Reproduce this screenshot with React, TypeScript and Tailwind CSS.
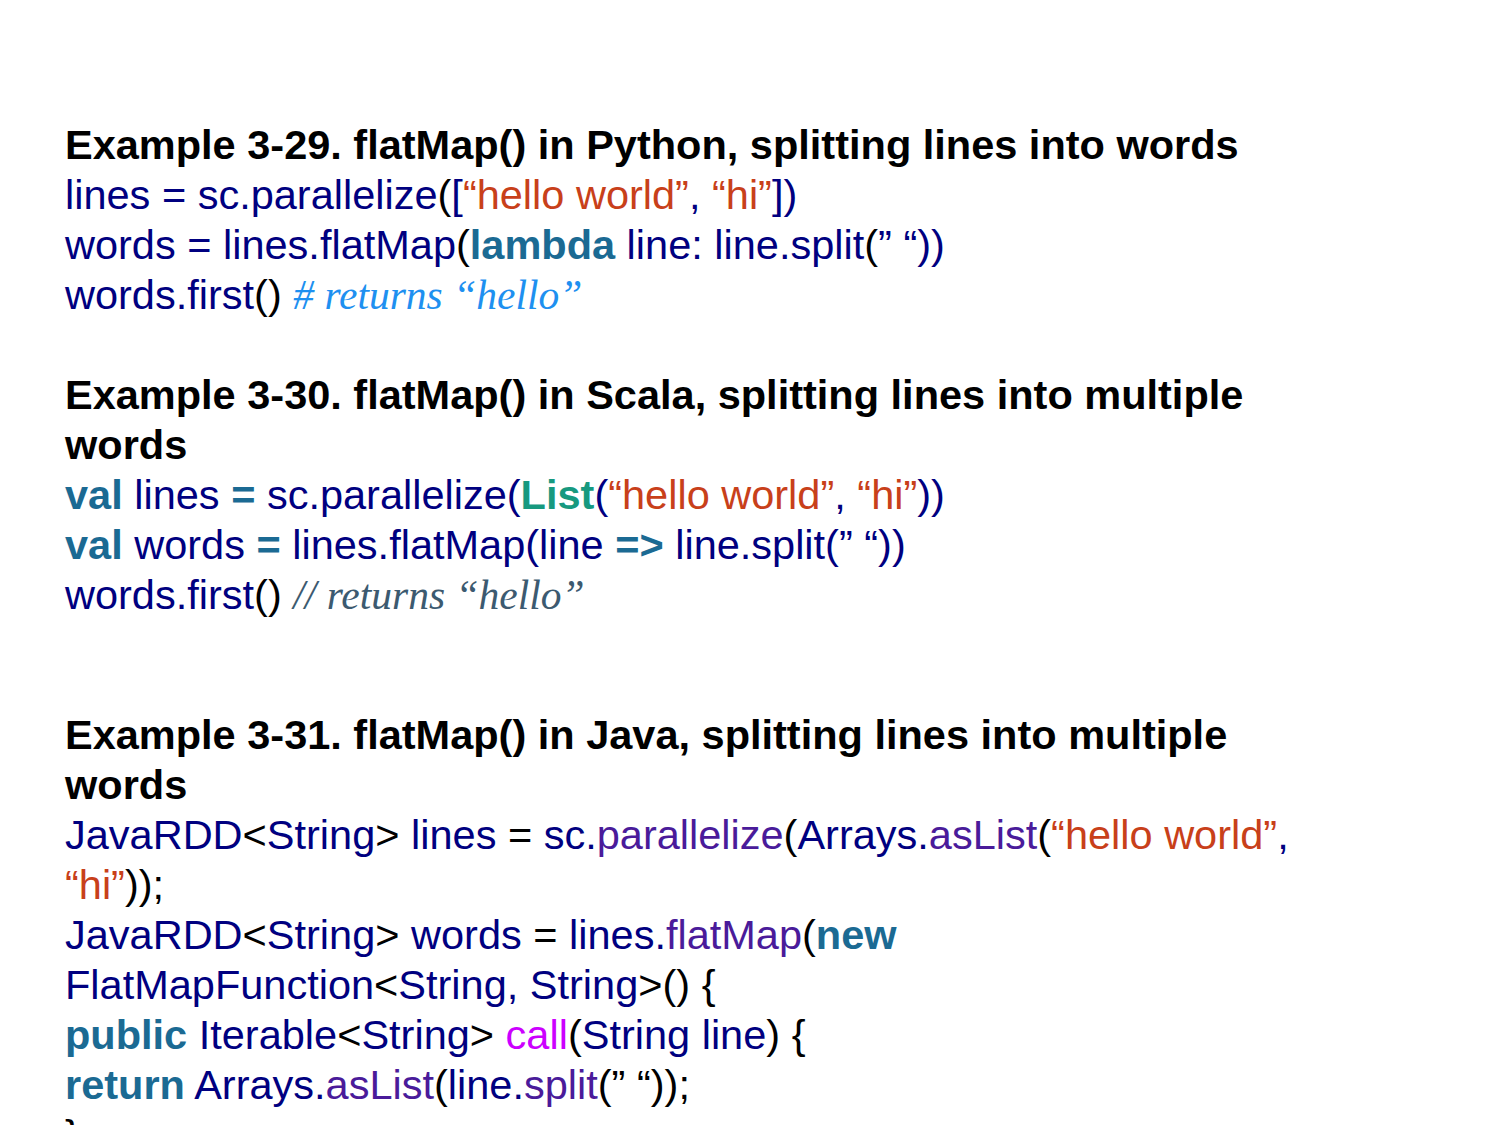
const N = "text-[#000080]";
const S = "text-[#c8401a]";
const K = "font-bold text-[#1b6a93]";
const P = "text-[#4a1b9a]";
const B = "text-black";

const Line = ({ children, className = "" }: { children: React.ReactNode; className?: string }) => (
  <div className={`h-[50px] leading-[50px] whitespace-pre ${className}`}>{children}</div>
);

const Title = ({ children }: { children: React.ReactNode }) => (
  <div className="font-bold text-black leading-[50px]">{children}</div>
);

export default function App() {
  return (
    <div
      className="w-[1500px] h-[1125px] overflow-hidden bg-white pl-[65px] pt-[120px] text-[41.5px]"
      style={{ fontFamily: '"Liberation Sans", Arial, sans-serif' }}
    >
      <Title>Example 3-29. flatMap() in Python, splitting lines into words</Title>
      <Line className={N}>
        lines = sc.parallelize<span className={B}>(</span>[<span className={S}>“hello world”</span>, <span className={S}>“hi”</span>])
      </Line>
      <Line className={N}>
        words = lines.flatMap<span className={B}>(</span><span className={K}>lambda</span> line: line.split<span className={B}>(</span>” “))
      </Line>
      <Line className={N}>
        words.first<span className={B}>()</span>{" "}
        <span className="italic text-[#1e90f0]" style={{ fontFamily: '"Liberation Serif", serif' }}># returns “hello”</span>
      </Line>

      <div className="mt-[50px] w-[1240px]">
        <Title>Example 3-30. flatMap() in Scala, splitting lines into multiple words</Title>
      </div>
      <Line className={N}>
        <span className={K}>val</span> lines <span className={K}>=</span> sc.parallelize(<span className="font-bold text-[#17997f]">List</span>(<span className={S}>“hello world”</span>, <span className={S}>“hi”</span>))
      </Line>
      <Line className={N}>
        <span className={K}>val</span> words <span className={K}>=</span> lines.flatMap(line <span className={K}>=&gt;</span> line.split(” “))
      </Line>
      <Line className={N}>
        words.first<span className={B}>()</span>{" "}
        <span className="italic text-[#3c5a70]" style={{ fontFamily: '"Liberation Serif", serif' }}>// returns “hello”</span>
      </Line>

      <div className="mt-[90px] w-[1240px]">
        <Title>Example 3-31. flatMap() in Java, splitting lines into multiple words</Title>
      </div>
      <div>
        <Line className={N}>
          JavaRDD<span className={B}>&lt;</span>String<span className={B}>&gt;</span> lines <span className={B}>=</span> sc.<span className={P}>parallelize</span><span className={B}>(</span>Arrays.<span className={P}>asList</span><span className={B}>(</span><span className={S}>“hello world”</span>,
        </Line>
        <Line className={B}>
          <span className={S}>“hi”</span>));
        </Line>
        <Line className={N}>
          JavaRDD<span className={B}>&lt;</span>String<span className={B}>&gt;</span> words <span className={B}>=</span> lines.<span className={P}>flatMap</span><span className={B}>(</span><span className={K}>new</span>
        </Line>
        <Line className={N}>
          FlatMapFunction<span className={B}>&lt;</span>String, String<span className={B}>&gt;() {"{"}</span>
        </Line>
        <Line className={N}>
          <span className={K}>public</span> Iterable<span className={B}>&lt;</span>String<span className={B}>&gt;</span> <span className="text-[#cc00ff]">call</span><span className={B}>(</span>String line<span className={B}>) {"{"}</span>
        </Line>
        <Line className={N}>
          <span className={K}>return</span> Arrays.<span className={P}>asList</span><span className={B}>(</span>line.<span className={P}>split</span><span className={B}>(” “));</span>
        </Line>
        <Line className={B}>{"}"}</Line>
      </div>
    </div>
  );
}
